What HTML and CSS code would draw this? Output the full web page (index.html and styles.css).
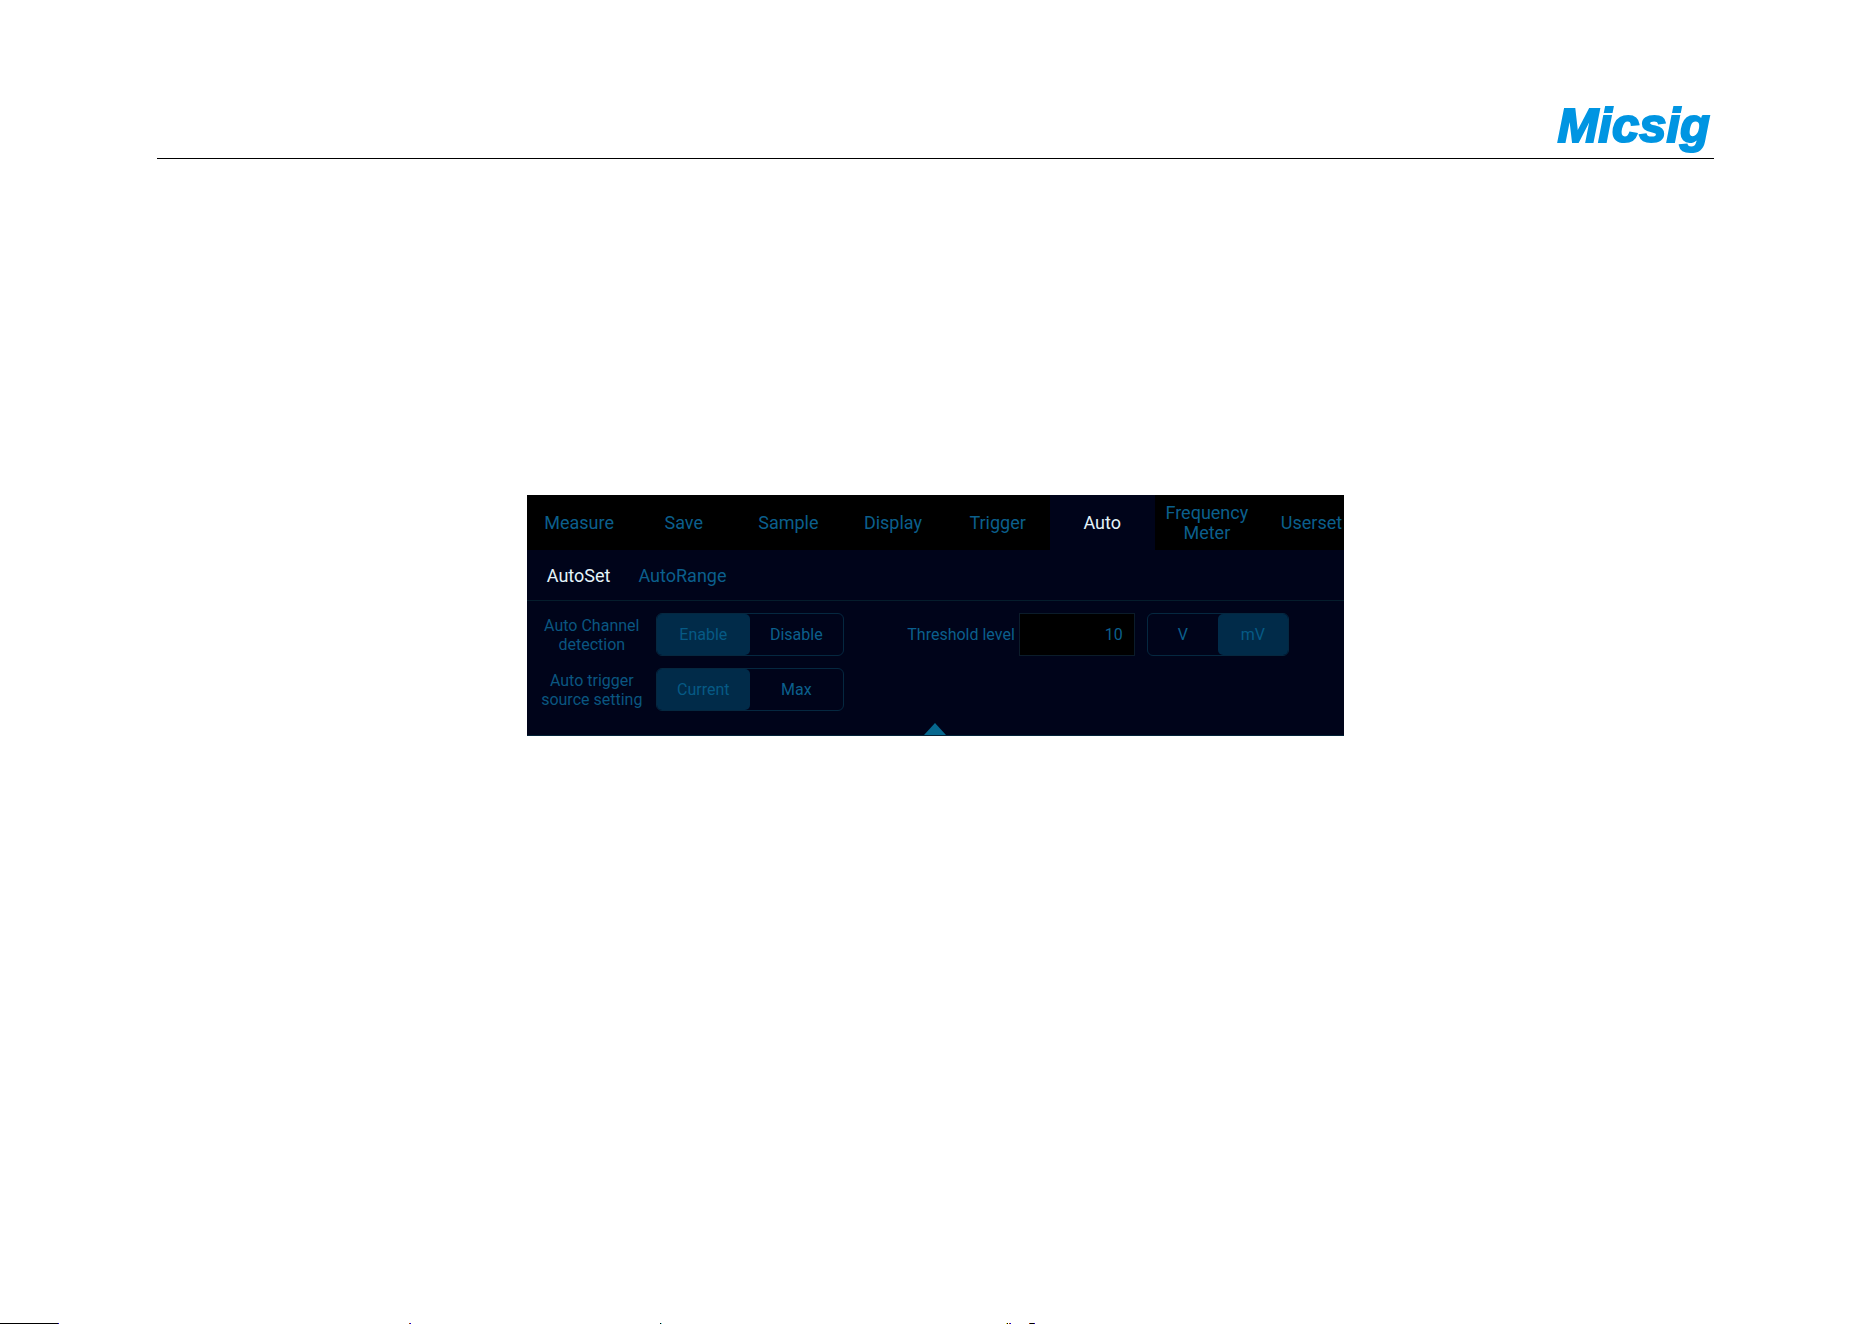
FILE: index.html
```
<!DOCTYPE html>
<html lang="en">
<head>
    <meta charset="UTF-8">
    <meta name="viewport" content="width=device-width, initial-scale=1.0">
    <title>Micsig - Auto</title>
    <link rel="stylesheet" href="styles.css">
</head>
<body>

<header class="page-header">
    <span class="logo">Micsig</span>
</header>

<main class="content">
    <div class="panel">
        <!-- Main menu -->
        <nav class="tabs">
            <button class="tab">Measure</button>
            <button class="tab">Save</button>
            <button class="tab">Sample</button>
            <button class="tab">Display</button>
            <button class="tab">Trigger</button>
            <button class="tab active">Auto</button>
            <button class="tab">Frequency<br>Meter</button>
            <button class="tab">Userset</button>
        </nav>

        <nav class="subtabs">
            <button class="subtab active">AutoSet</button>
            <button class="subtab">AutoRange</button>
        </nav>

        <!-- AutoSet options -->
        <div class="options">
            <div class="row">
                <span class="label" id="channelLabel">Auto Channel<br>detection</span>
                <div class="segment" role="group" aria-labelledby="channelLabel">
                    <button class="choice selected">Enable</button>
                    <button class="choice">Disable</button>
                </div>
                <label class="threshold-label" for="threshold">Threshold level</label>
                <input type="text" id="threshold" class="threshold" value="10">
                <div class="segment units" role="group" aria-label="Unit">
                    <button class="choice">V</button>
                    <button class="choice selected">mV</button>
                </div>
            </div>
            <div class="row">
                <span class="label" id="sourceLabel">Auto trigger<br>source setting</span>
                <div class="segment" role="group" aria-labelledby="sourceLabel">
                    <button class="choice selected">Current</button>
                    <button class="choice">Max</button>
                </div>
            </div>
        </div>

        <button class="collapse" aria-label="Collapse">
            <svg width="22" height="12" viewBox="0 0 22 12"><path d="M11 0 22 12H0z" fill="#07688f"/></svg>
        </button>
    </div>
</main>

<!-- Top edge of the next line -->
<footer class="page-edge">
    <svg width="1100" height="1" viewBox="0 0 1100 1" shape-rendering="crispEdges">
        <path d="M0 0h58v1H0zM660 0h1v1h-1zM1007 0h1v1h-1zM1030 0h4v1h-4z" fill="#000"/>
        <path d="M58 0h1v1h-1zM410 0h1v1h-1zM1010 0h1v1h-1zM1034 0h1v1h-1z" fill="#1a00c8"/>
        <path d="M409 0h1v1h-1zM1009 0h1v1h-1zM1029 0h1v1h-1z" fill="#a03c00"/>
        <path d="M661 0h1v1h-1z" fill="#70e0e0"/>
        <path d="M1006 0h1v1h-1z" fill="#f0e040"/>
    </svg>
</footer>

</body>
</html>
```
FILE: styles.css
```
* { box-sizing: border-box; }
body { margin: 0; min-height: 100vh; display: flex; flex-direction: column; background-color: #fff; font-family: Roboto, sans-serif; }
button { margin: 0; padding: 0; border: none; background: none; font-family: inherit; color: #0b5f8c; cursor: pointer; }

.page-header { display: flex; justify-content: flex-end; margin: 94px 158px 0 157px; height: 65px; padding-right: 4px; border-bottom: 1px solid #000; }
.logo { font-family: "Liberation Sans", Arial, sans-serif; font-size: 49px; line-height: 62px; font-weight: bold; font-style: italic; color: #0095e2; -webkit-text-stroke: 2px #0095e2; }

.content { margin: 336px 158px 0 157px; }
.panel { width: 52.5%; min-width: 780px; margin: 0 auto; background-color: #00041a; border-bottom: 1px solid #032338; overflow: hidden; }

.tabs { display: flex; height: 55px; background-color: #000; }
.tab { flex: 0 0 12.8%; font-size: 18px; line-height: 20px; }
.tab.active { background-color: #00041a; color: #e4f4fa; }

.subtabs { display: flex; gap: 28px; height: 51px; padding: 0 20px; border-bottom: 1px solid #051d2c; }
.subtab { font-size: 18px; }
.subtab.active { color: #e4f4fa; }

.options { display: flex; flex-direction: column; gap: 12px; padding: 12px 12px 0; }
.row { display: flex; align-items: center; height: 43px; }
.label { width: 106px; margin-right: 11px; text-align: center; font-size: 16px; line-height: 19px; white-space: nowrap; color: #0a5680; }
.segment { display: flex; width: 188px; height: 43px; border: 1px solid #052840; border-radius: 6px; }
.choice { flex: 1; font-size: 16px; }
.choice.selected { background-color: #012b49; border-radius: 5px; color: #065a85; }
.threshold-label { width: 171px; text-align: right; font-size: 16px; color: #0b5f8c; }
.threshold { width: 116px; height: 43px; margin: 0 12px 0 4px; padding: 0 11px; border: 1px solid #0b1c2a; background-color: #000; color: #0b5f8c; font-family: inherit; font-size: 16px; text-align: right; }
.units { width: 142px; }

.collapse { display: block; margin: 12px auto 0; height: 12px; }
.collapse svg { display: block; }

.page-edge { margin-top: auto; height: 1px; overflow: hidden; }
.page-edge svg { display: block; }
```
